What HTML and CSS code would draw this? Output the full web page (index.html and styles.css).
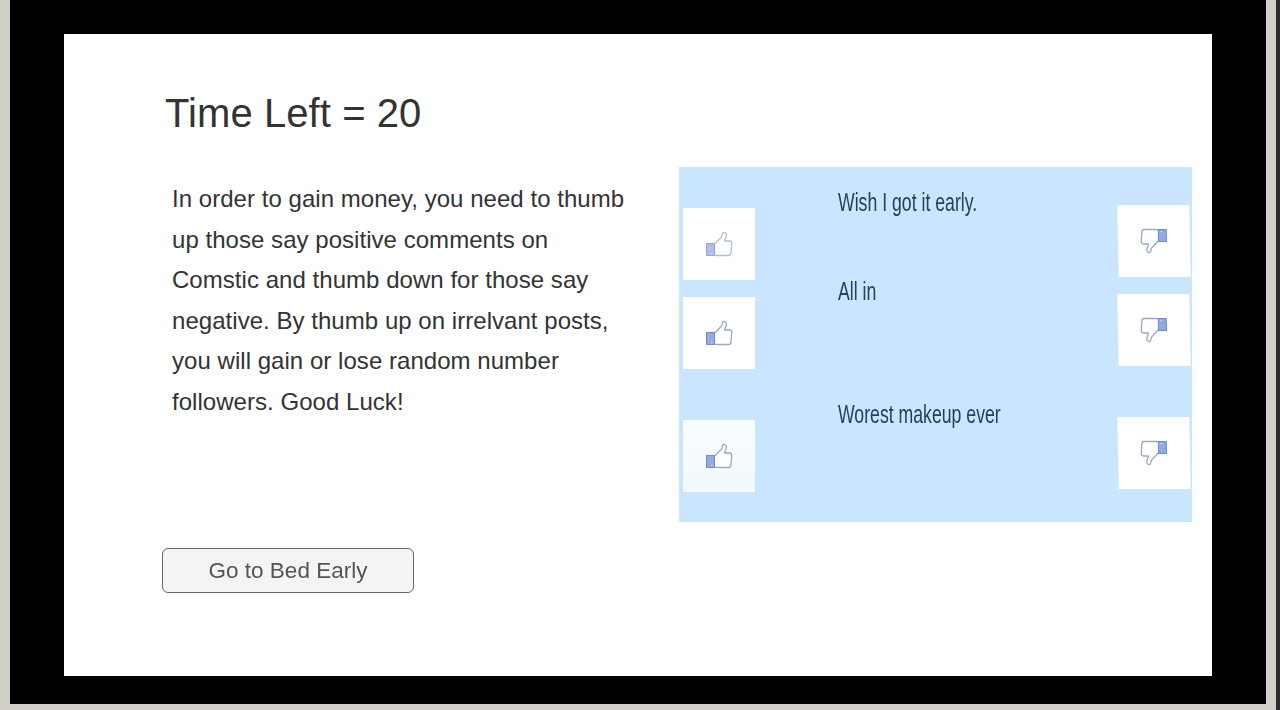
FILE: index.html
```html
<!DOCTYPE html>
<html lang="en">
<head>
    <meta charset="UTF-8">
    <meta name="viewport" content="width=device-width, initial-scale=1.0">
    <title>Comstic</title>
    <link rel="stylesheet" href="styles.css">
</head>
<body>
    <svg class="sprite" width="0" height="0">
        <symbol id="thumb" viewBox="0 0 28 26">
            <path class="hand" d="M9.3 13 L10.6 12.3 L16.8 5.6 L17.6 2.4 C18.2 0.8 21.3 1.2 21.4 3.8 C21.5 6 19.6 7.6 19.8 10 L24.5 10 C26.4 10.1 26.8 11.2 26.7 13 L25.9 22.3 C25.7 24 25 24.5 23.6 24.5 L11.5 24.5 L9.3 23.8"/>
            <path class="cuff" d="M1.5 12.4 H9.5 V24.5 H1.5 Z"/>
            <path class="stitch" d="M6 22.3 h1.4"/>
        </symbol>
    </svg>

    <div class="stage">
        <section class="info">
            <h1>Time Left = <span id="time">20</span></h1>
            <p>In order to gain money, you need to thumb<br>
                up those say positive comments on<br>
                Comstic and thumb down for those say<br>
                negative. By thumb up on irrelvant posts,<br>
                you will gain or lose random number<br>
                followers. Good Luck!</p>
            <button class="bed-btn"><span>Go to Bed Early</span></button>
        </section>

        <section class="posts">
            <div class="post">
                <button class="thumb up faded"><svg><use href="#thumb"/></svg></button>
                <div class="comment">Wish I got it early.</div>
                <button class="thumb down"><svg><use href="#thumb"/></svg></button>
            </div>
            <div class="post">
                <button class="thumb up"><svg><use href="#thumb"/></svg></button>
                <div class="comment">All in</div>
                <button class="thumb down"><svg><use href="#thumb"/></svg></button>
            </div>
            <div class="post">
                <button class="thumb up tinted"><svg><use href="#thumb"/></svg></button>
                <div class="comment">Worest makeup ever</div>
                <button class="thumb down"><svg><use href="#thumb"/></svg></button>
            </div>
        </section>
    </div>
</body>
</html>
```
FILE: styles.css
```css
* {
    margin: 0;
    padding: 0;
    box-sizing: border-box;
    font-family: "Liberation Sans", Arial, sans-serif;
}

html {
    height: 100%;
    background: #2d2c2a;
}

body {
    height: 100%;
    margin-right: 4px;
    padding: 34px 54px 28px 54px;
    background: #000;
    border: solid #d2cec8;
    border-width: 0 10px 6px 10px;
    overflow: hidden;
}

.sprite {
    display: none;
}

.stage {
    display: flex;
    width: 1148px;
    height: 642px;
    background: #fff;
}

/* left side */
.info {
    width: 615px;
    padding: 56px 0 0 98px;
    color: #333;
}

h1 {
    padding-left: 3px;
    font-size: 40px;
    font-weight: normal;
    letter-spacing: 0.08px;
    line-height: 46px;
}

.info p {
    margin-top: 43px;
    padding-left: 10px;
    font-size: 24px;
    letter-spacing: 0.04px;
    line-height: 40.6px;
    white-space: nowrap;
}

.bed-btn {
    display: block;
    width: 252px;
    height: 45px;
    margin-top: 125px;
    padding-top: 1px;
    background: #f4f4f4;
    border: 1px solid #666;
    border-radius: 6px;
    color: #555;
    font-size: 22.5px;
}

.bed-btn span {
    display: inline-block;
    filter: blur(0.4px);
}

/* comment list */
.posts {
    display: grid;
    grid-template-rows: 89px 123px 1fr;
    width: 513px;
    height: 355px;
    margin-top: 133px;
    padding: 23px 2px 0 4px;
    background: #c9e5ff;
}

.post {
    display: flex;
    align-items: flex-start;
}

.comment {
    flex: 1;
    margin-left: 83px;
    color: #2b3f54;
    font-size: 25px;
    line-height: 25px;
    white-space: nowrap;
    transform: scaleX(0.707);
    transform-origin: left;
}

.thumb {
    display: flex;
    align-items: center;
    justify-content: center;
    width: 72px;
    height: 72px;
    background: #fefffe;
    border: none;
}

.thumb svg {
    width: 28px;
    height: 26px;
}

.up {
    margin-top: 18px;
}

.down {
    margin-top: 15px;
    transform: skewX(1.2deg);
}

.down svg {
    transform: rotate(180deg);
}

.faded svg {
    opacity: 0.75;
}

.tinted {
    background: linear-gradient(#fafeff, #f1f9fc);
}

.hand {
    fill: #fff;
    stroke: #9aa8c2;
    stroke-width: 1.3;
}

.cuff {
    fill: #92a9e2;
    stroke: #7189c4;
    stroke-width: 1;
}

.stitch {
    stroke: #dce5fa;
    stroke-width: 1;
}
```
